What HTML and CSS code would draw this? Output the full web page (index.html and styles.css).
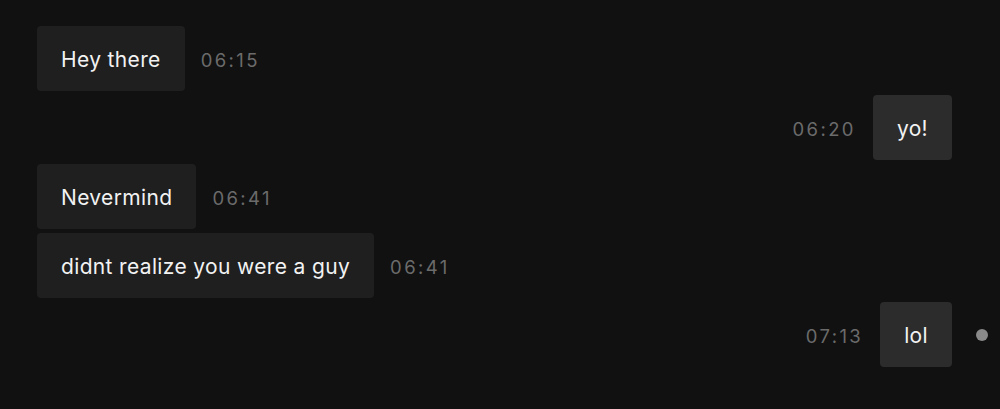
FILE: index.html
```html
<!DOCTYPE html>
<html lang="en">
<head>
<meta charset="utf-8">
<title>Chat</title>
<link rel="stylesheet" href="styles.css">
</head>
<body>
<main class="chat">
  <div class="row in">
    <div class="bubble">Hey there</div>
    <span class="time">06:15</span>
  </div>
  <div class="row out">
    <span class="time">06:20</span>
    <div class="bubble">yo!</div>
    <span class="status"></span>
  </div>
  <div class="row in">
    <div class="bubble">Nevermind</div>
    <span class="time">06:41</span>
  </div>
  <div class="row in">
    <div class="bubble">didnt realize you were a guy</div>
    <span class="time">06:41</span>
  </div>
  <div class="row out">
    <span class="time">07:13</span>
    <div class="bubble">lol</div>
    <span class="status"><span class="dot"></span></span>
  </div>
</main>
</body>
</html>
```
FILE: styles.css
```css
html, body {
  margin: 0;
  padding: 0;
  background: #111111;
  height: 100%;
}
body {
  font-family: "Inter", "Liberation Sans", sans-serif;
  color: #f2f2f2;
}
.chat {
  display: flex;
  flex-direction: column;
  gap: 4px;
  padding: 26px 12px 0 37px;
}
.row {
  display: flex;
  align-items: center;
}
.row.in {
  justify-content: flex-start;
  gap: 16px;
}
.row.out {
  justify-content: flex-end;
}
.bubble {
  height: 65px;
  box-sizing: border-box;
  padding: 2px 24px 0;
  display: flex;
  align-items: center;
  font-size: 21px;
  letter-spacing: 0.35px;
  border-radius: 4px;
  background: #1f1f1f;
  white-space: nowrap;
}
.row.out .bubble {
  background: #2c2c2c;
}
.row.out .time {
  margin-right: 17px;
}
.time {
  font-size: 18.5px;
  color: #6b6b6b;
  letter-spacing: 2.4px;
  padding-top: 2px;
}
.status {
  width: 12px;
  margin-left: 24px;
  display: flex;
  justify-content: center;
}
.dot {
  width: 12px;
  height: 12px;
  border-radius: 50%;
  background: #8a8a8a;
}
```
